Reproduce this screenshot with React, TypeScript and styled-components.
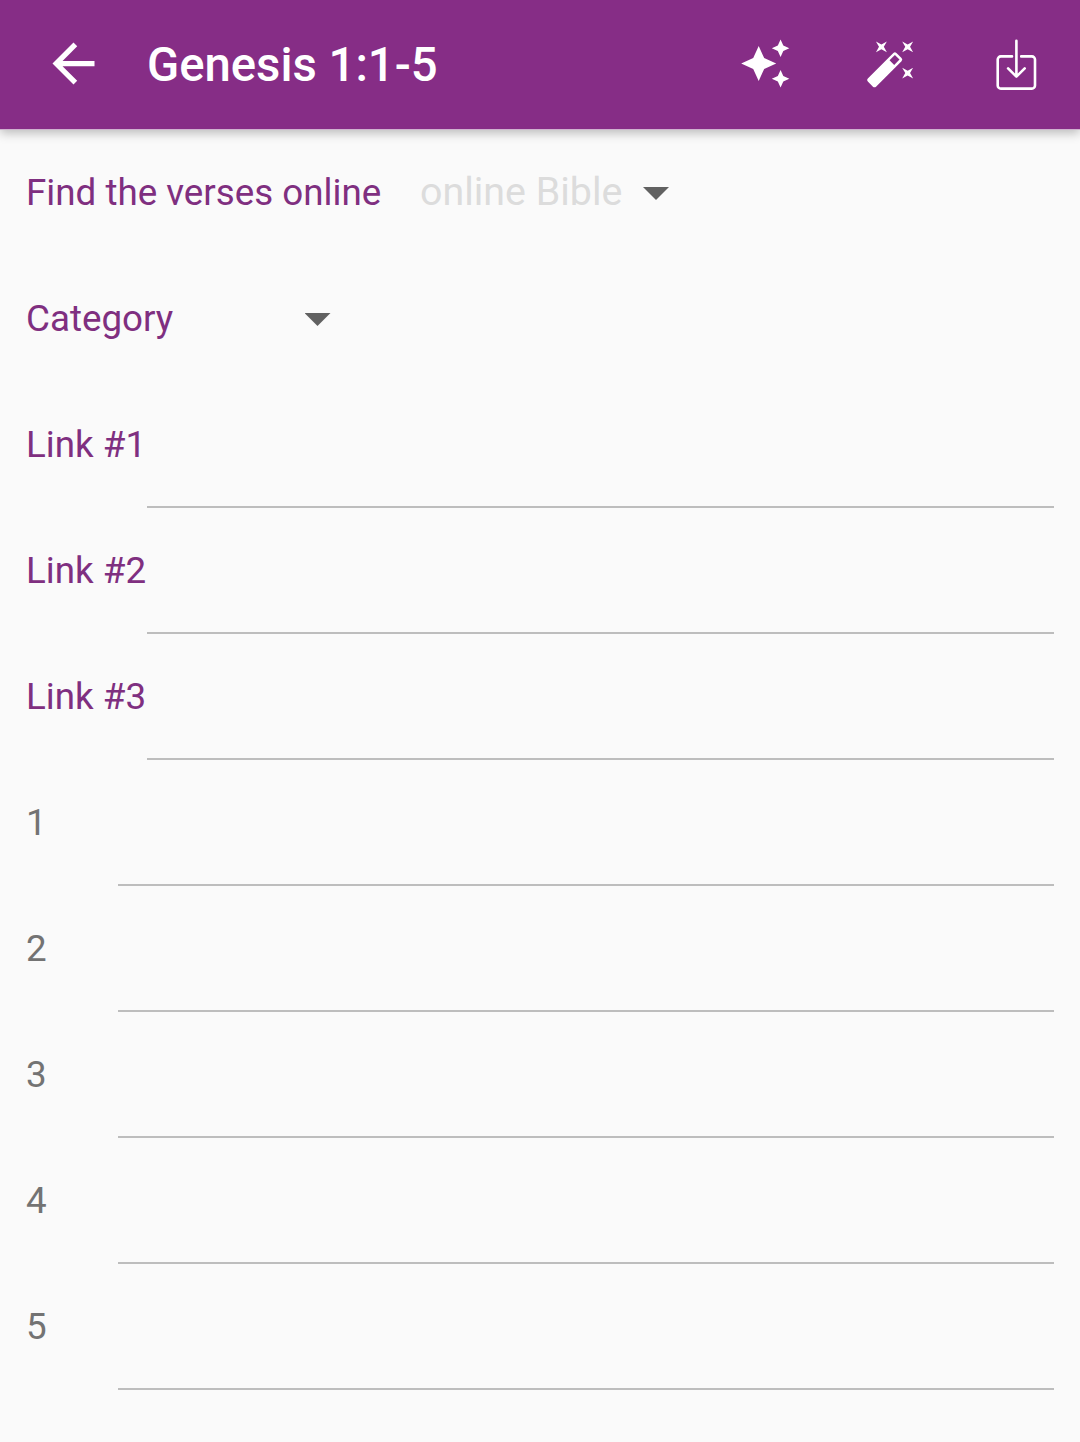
import React from "react";
import styled, { createGlobalStyle } from "styled-components";

const GlobalStyle = createGlobalStyle`
  * { box-sizing: border-box; }
  body {
    margin: 0;
    background: #fafafa;
    font-family: Roboto, "Noto Sans", sans-serif;
  }
`;

const Screen = styled.div`
  min-height: 1442px;
  background: #fafafa;
  overflow: hidden;
`;

const Toolbar = styled.header`
  display: flex;
  align-items: center;
  height: 130px;
  padding: 0 38px 2px 42px;
  border-bottom: 1px solid #cfb2cf;
  background: #862d86;
  color: #fff;
  box-shadow: 0 3px 10px rgba(0, 0, 0, 0.26);
`;

const Title = styled.h1`
  flex: 1;
  margin: 3px 0 0 42px;
  font-size: 47.25px;
  line-height: 56px;
  font-weight: 500;
  white-space: nowrap;
`;

const Actions = styled.div`
  display: flex;
  align-items: center;
`;

const IconButton = styled.button<{ $size: number; $gap?: number }>`
  display: flex;
  width: ${(p) => p.$size}px;
  height: ${(p) => p.$size}px;
  margin-left: ${(p) => p.$gap ?? 0}px;
  padding: 0;
  border: 0;
  background: none;
  color: inherit;

  svg {
    display: block;
    width: 100%;
    height: 100%;
  }
`;

const Form = styled.main`
  padding: 0 26.25px 0 26px;
`;

const Row = styled.div`
  display: flex;
  height: 126px;
`;

const Label = styled.label<{ $muted?: boolean; $width?: number }>`
  flex: none;
  width: ${(p) => (p.$width ? `${p.$width}px` : "auto")};
  padding-top: 41px;
  font-size: 36.75px;
  line-height: 43px;
  white-space: nowrap;
  color: ${(p) => (p.$muted ? "#737373" : "#7f2f80")};
`;

const Input = styled.input`
  flex: 1;
  min-width: 0;
  height: 126px;
  padding: 0;
  border: 0;
  border-bottom: 2px solid #bdbdbd;
  background: transparent;
  font: 36.75px Roboto, sans-serif;
  outline: none;
`;

const Picker = styled.div<{ $offset: number; $width: number }>`
  display: flex;
  align-items: center;
  justify-content: space-between;
  width: ${(p) => p.$width}px;
  height: 126px;
  margin-left: ${(p) => p.$offset}px;
  padding-bottom: 2px;
`;

const Placeholder = styled.span`
  font-size: 39.375px;
  line-height: 46px;
  white-space: nowrap;
  color: #dcdcdc;
`;

const Caret = styled.span`
  width: 26px;
  height: 13px;
  margin: 3px 0 0 auto;
  background: #616161;
  clip-path: polygon(0 0, 100% 0, 50% 100%);
`;

const BackIcon = () => (
  <svg viewBox="0 0 24 24" fill="currentColor">
    <path d="M20 11H7.83l5.59-5.59L12 4l-8 8 8 8 1.41-1.41L7.83 13H20v-2z" />
  </svg>
);

const SparkleIcon = () => (
  <svg viewBox="0 -0.1 24 24" fill="currentColor">
    <path d="M19 9l1.25-2.75L23 5l-2.75-1.25L19 1l-1.25 2.75L15 5l2.75 1.25L19 9zm-7.5.5L9 4 6.5 9.5 1 12l5.5 2.5L9 20l2.5-5.5L17 12l-5.5-2.5zM19 15l-1.25 2.75L15 19l2.75 1.25L19 23l1.25-2.75L23 19l-2.75-1.25L19 15z" />
  </svg>
);

const WandIcon = () => (
  <svg viewBox="0 0 24 24" fill="currentColor">
    <path d="M7.5 5.6L10 7 8.6 4.5 10 2 7.5 3.4 5 2l1.4 2.5L5 7zm12 9.8L17 14l1.4 2.5L17 19l2.5-1.4L22 19l-1.4-2.5L22 14zM22 2l-2.5 1.4L17 2l1.4 2.5L17 7l2.5-1.4L22 7l-1.4-2.5zm-7.63 5.29a.996.996 0 0 0-1.41 0L1.29 18.96a.996.996 0 0 0 0 1.41l2.34 2.34c.39.39 1.02.39 1.41 0L16.7 11.05a.996.996 0 0 0 0-1.41l-2.33-2.35zm-1.03 5.49l-2.12-2.12 2.44-2.44 2.12 2.12-2.44 2.44z" />
  </svg>
);

const DownloadIcon = () => (
  <svg
    viewBox="0 0 52.5 52.5"
    fill="none"
    stroke="currentColor"
    strokeWidth="2.6"
    strokeLinecap="round"
    strokeLinejoin="round"
  >
    <path d="M22 19.4H10.8a3.1 3.1 0 0 0-3.1 3.1v26a3.1 3.1 0 0 0 3.1 3.1h31.1a3.1 3.1 0 0 0 3.1-3.1v-26a3.1 3.1 0 0 0-3.1-3.1H31.2" />
    <path d="M26.4 3.7V39.4M18.1 31.4l8.3 8.2 8.3-8.2" />
  </svg>
);

const links = ["Link #1", "Link #2", "Link #3"];
const verses = ["1", "2", "3", "4", "5"];

export default function App() {
  return (
    <>
      <GlobalStyle />
      <Screen>
        <Toolbar>
          <IconButton $size={63} aria-label="Back">
            <BackIcon />
          </IconButton>
          <Title>Genesis 1:1-5</Title>
          <Actions>
            <IconButton $size={52.5} aria-label="Suggest">
              <SparkleIcon />
            </IconButton>
            <IconButton $size={52.5} $gap={73.5} aria-label="Fill in">
              <WandIcon />
            </IconButton>
            <IconButton $size={52.5} $gap={72.4} aria-label="Save">
              <DownloadIcon />
            </IconButton>
          </Actions>
        </Toolbar>
        <Form>
          <Row>
            <Label>Find the verses online</Label>
            <Picker $offset={38.8} $width={249}>
              <Placeholder>online Bible</Placeholder>
              <Caret />
            </Picker>
          </Row>
          <Row>
            <Label $width={147}>Category</Label>
            <Picker $offset={0} $width={157.5}>
              <Caret />
            </Picker>
          </Row>
          {links.map((name) => (
            <Row key={name}>
              <Label htmlFor={name} $width={120.75}>
                {name}
              </Label>
              <Input id={name} />
            </Row>
          ))}
          {verses.map((number) => (
            <Row key={number}>
              <Label htmlFor={`verse-${number}`} $muted $width={92}>
                {number}
              </Label>
              <Input id={`verse-${number}`} />
            </Row>
          ))}
        </Form>
      </Screen>
    </>
  );
}
